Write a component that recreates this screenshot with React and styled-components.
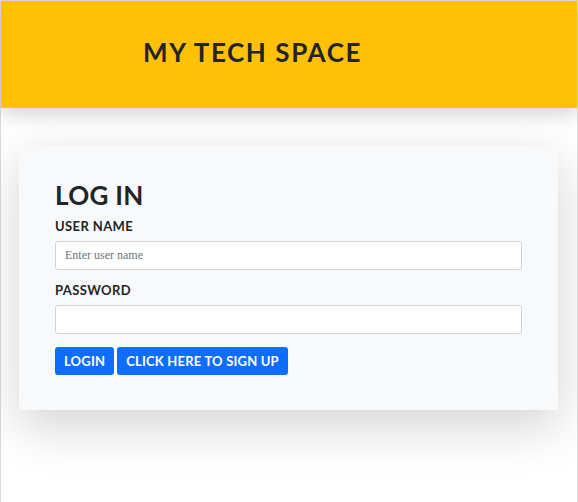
import React from "react";
import styled, { createGlobalStyle } from "styled-components";

const GlobalStyle = createGlobalStyle`
  html, body {
    margin: 0;
    padding: 0;
    height: 100%;
    background: #fff;
  }
  #root {
    height: 100%;
  }
  * {
    box-sizing: border-box;
  }
`;

const Page = styled.div`
  min-height: 100%;
  border: 1px solid #dcdcdc;
  border-bottom: none;
  font-family: "Lato", "Liberation Sans", sans-serif;
  color: #212529;
`;

const Header = styled.header`
  height: 107px;
  background: #ffc107;
  display: flex;
  align-items: center;
  padding: 0 0 6px 142px;
  box-shadow: 0 0.5rem 1rem rgba(0, 0, 0, 0.15);
  position: relative;
  h1 {
    margin: 0;
    font-size: 26px;
    font-weight: 700;
    letter-spacing: 1.6px;
    color: #212529;
  }
`;

const Card = styled.section`
  margin: 38px 19px 0 18px;
  background: #f8f9fa;
  padding: 34px 36px 35px;
  box-shadow: 0 1rem 3rem rgba(0, 0, 0, 0.175);
`;

const Title = styled.h2`
  margin: 0 0 7px;
  font-size: 26px;
  font-weight: 700;
  line-height: 1.2;
  letter-spacing: 0.3px;
`;

const Field = styled.div`
  margin-bottom: 12px;
`;

const Label = styled.label`
  display: block;
  font-size: 13px;
  font-weight: 700;
  letter-spacing: 0.4px;
  margin-bottom: 7px;
`;

const Input = styled.input`
  display: block;
  width: 100%;
  height: 29px;
  padding: 4px 9px;
  font-family: "Liberation Serif", serif;
  font-size: 12px;
  border: 1px solid #ced4da;
  border-radius: 3px;
  background: #fff;
  color: #212529;
  &::placeholder {
    color: #6c757d;
  }
`;

const Actions = styled.div`
  display: flex;
  gap: 3px;
  margin-top: 13px;
`;

const Button = styled.button`
  height: 28px;
  padding: 0 9px;
  border: none;
  border-radius: 3px;
  background: #0d6efd;
  color: #fff;
  font-family: "Lato", "Liberation Sans", sans-serif;
  font-size: 13px;
  font-weight: 700;
  letter-spacing: 0.2px;
`;

export default function App() {
  return (
    <Page>
      <GlobalStyle />
      <Header>
        <h1>MY TECH SPACE</h1>
      </Header>
      <Card>
        <Title>LOG IN</Title>
        <Field>
          <Label>USER NAME</Label>
          <Input placeholder="Enter user name" />
        </Field>
        <Field>
          <Label>PASSWORD</Label>
          <Input type="password" />
        </Field>
        <Actions>
          <Button>LOGIN</Button>
          <Button>CLICK HERE TO SIGN UP</Button>
        </Actions>
      </Card>
    </Page>
  );
}
